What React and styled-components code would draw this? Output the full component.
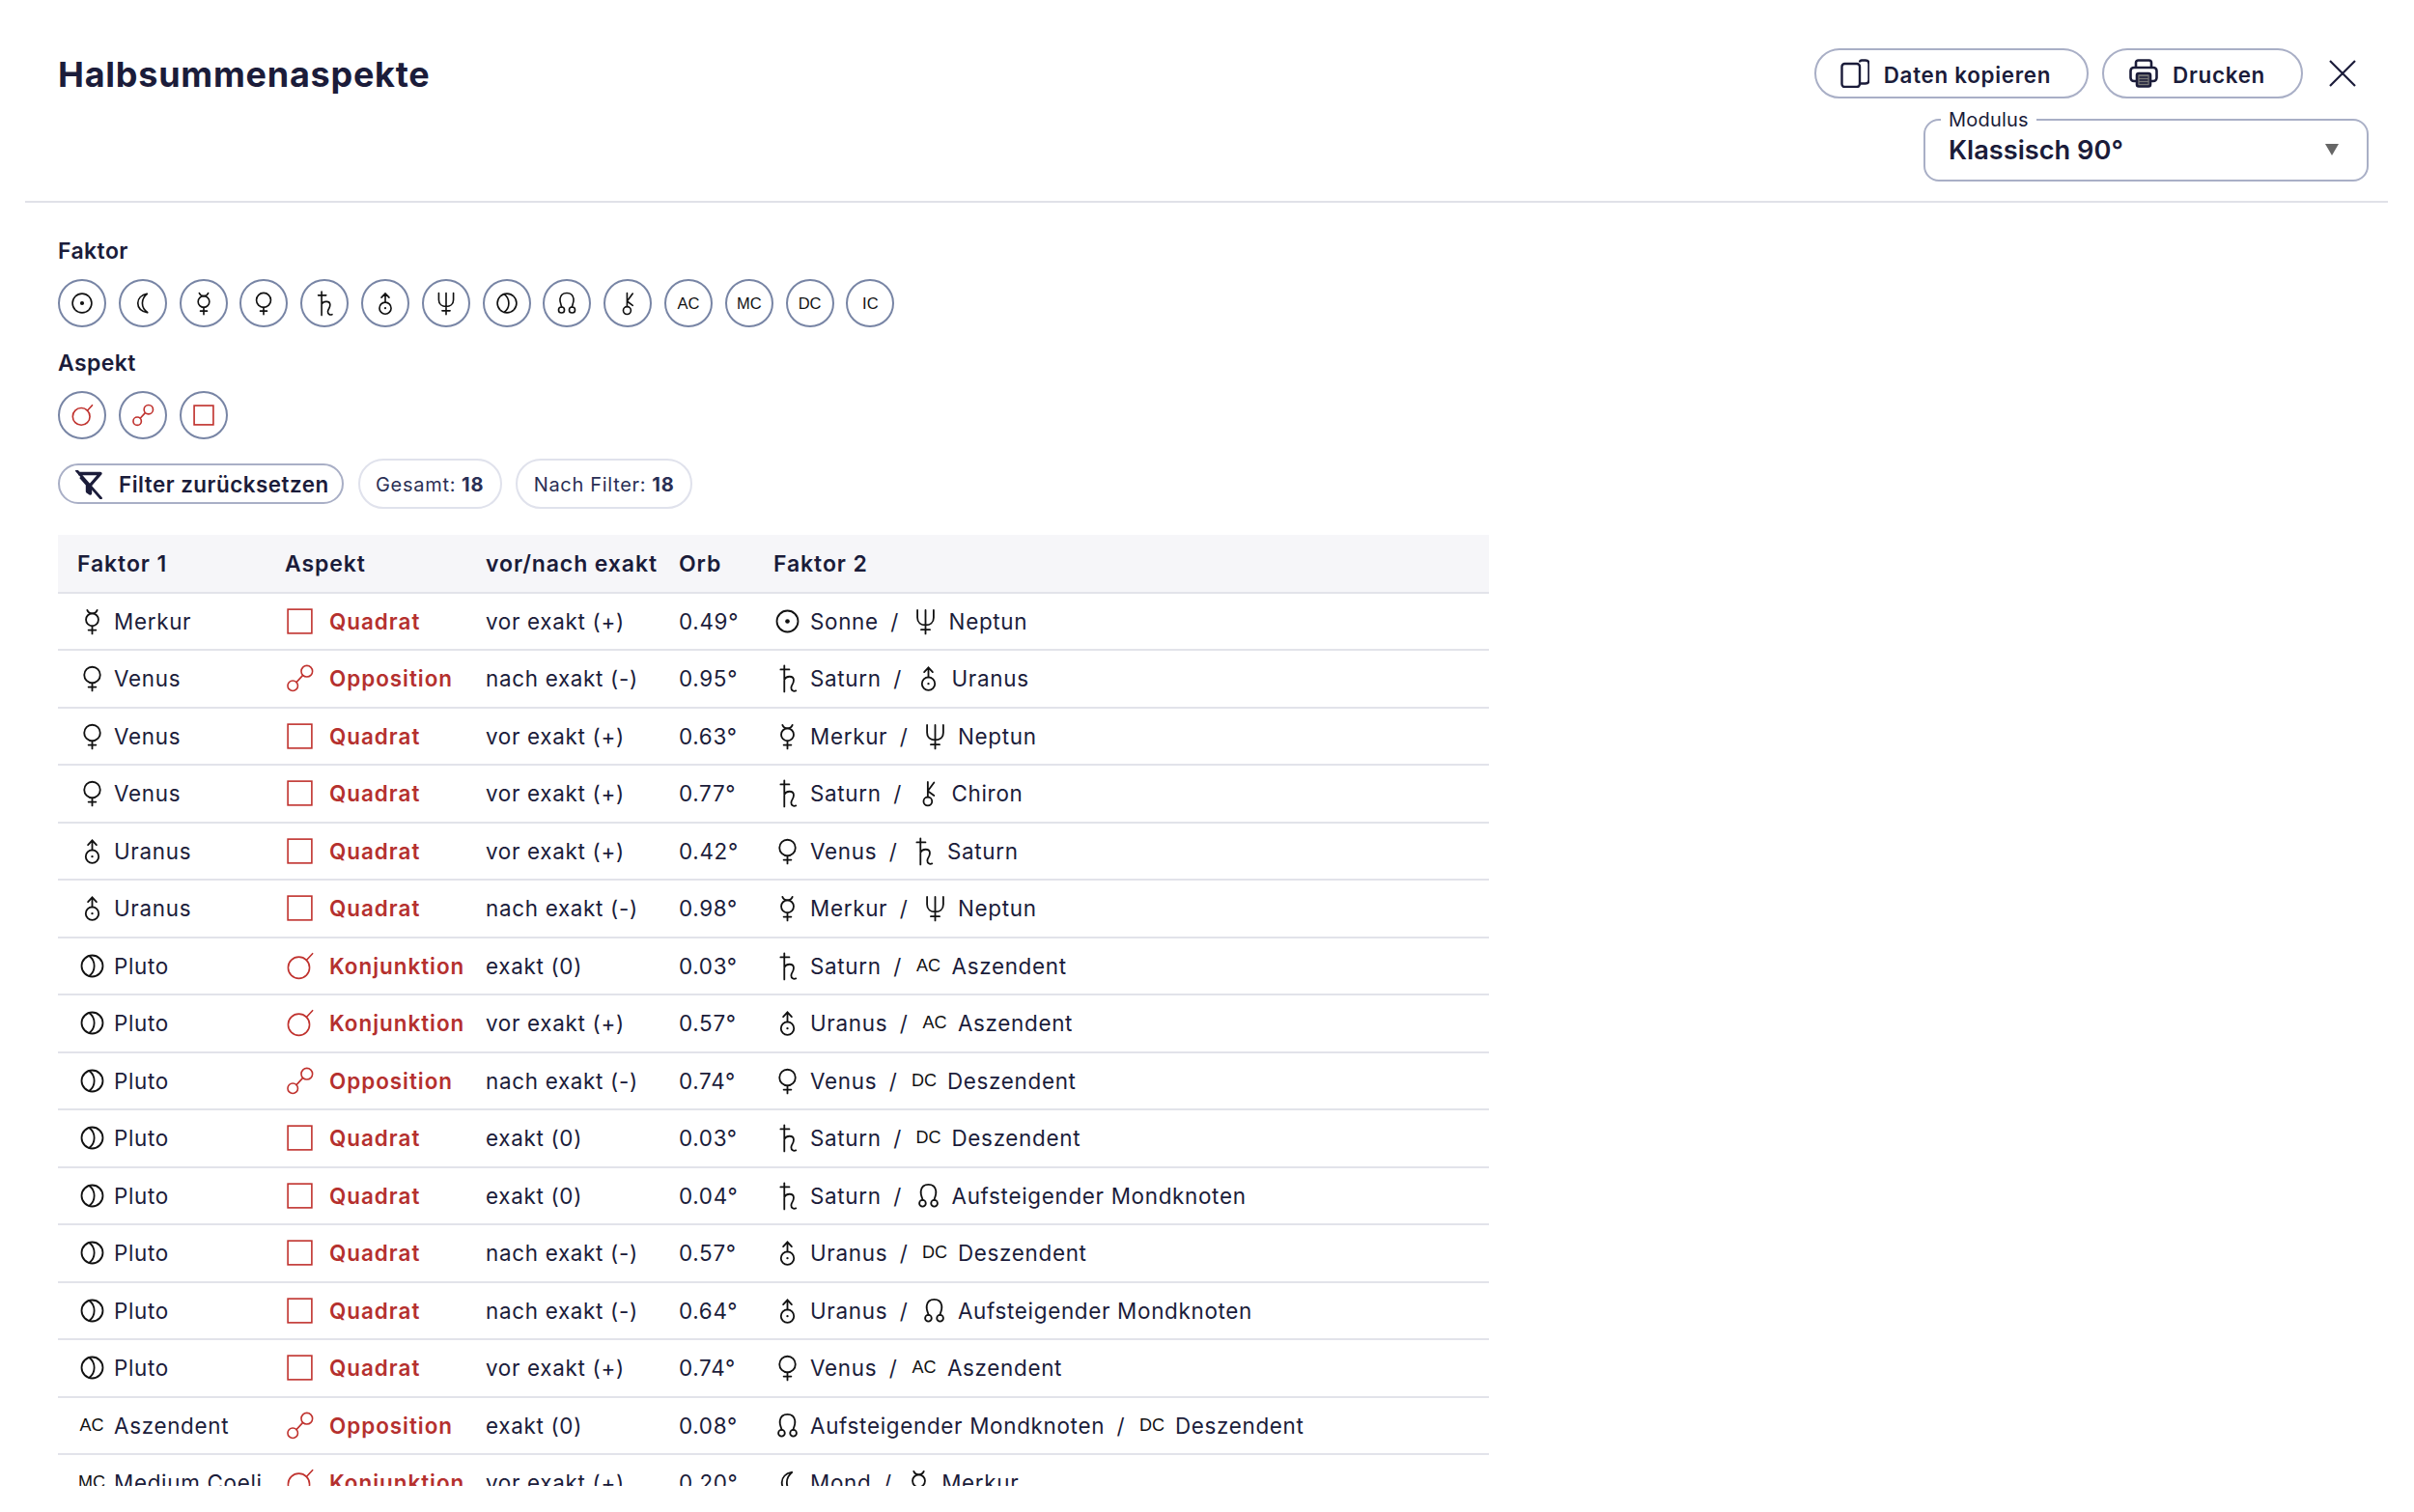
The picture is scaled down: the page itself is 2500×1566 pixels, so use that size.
// DEPENDENCIES
import React from 'react'
import styled, { createGlobalStyle } from 'styled-components'

// STYLES
const GlobalStyle = createGlobalStyle`
	html, body {
		margin: 0;
		background: #fff;
	}
	body {
		height: 1566px;
		overflow: hidden;
		font-family: Inter, "Liberation Sans", sans-serif;
		color: #1b1c3a;
	}
`

const Page = styled.div`
	width: 2500px;
	height: 1566px;
	box-sizing: border-box;
	padding: 0 27px 0 26px;
	overflow: hidden;
`

const Header = styled.header`
	display: flex;
	justify-content: space-between;
	align-items: flex-start;
	padding: 50px 20px 20px 34px;
	border-bottom: 2px solid #e0e1e8;
`

const Title = styled.h1`
	margin: 0;
	font-size: 36px;
	line-height: 54px;
	font-weight: 700;
	letter-spacing: 0.75px;
`

const HeaderRight = styled.div`
	display: flex;
	flex-direction: column;
	align-items: flex-end;
	gap: 21px;
`

const Actions = styled.div`
	display: flex;
	align-items: center;
`

const ActionButton = styled.button`
	display: flex;
	align-items: center;
	height: 52px;
	box-sizing: border-box;
	margin-right: 14px;
	padding: 0 37px 0 ${p => p.$left}px;
	gap: 15px;
	background: #fff;
	border: 2px solid #a9afc6;
	border-radius: 26px;
	font: 600 22.4px Inter, sans-serif;
	letter-spacing: 0.7px;
	color: #1b1c3a;

	span {
		padding-top: 2px;
	}
`

const CloseButton = styled.button`
	display: flex;
	width: 40px;
	height: 40px;
	margin: 0 7.5px 0 6.5px;
	padding: 0;
	align-items: center;
	justify-content: center;
	background: none;
	border: 0;
	color: #1b1c3a;
`

const SelectBox = styled.div`
	position: relative;
	display: flex;
	align-items: center;
	justify-content: space-between;
	width: 461px;
	height: 65px;
	box-sizing: border-box;
	padding: 0 29.5px 0 24px;
	border: 2px solid #a9afc6;
	border-radius: 16px;
`

const SelectLegend = styled.span`
	position: absolute;
	top: -13px;
	left: 16px;
	padding: 0 8px;
	background: #fff;
	font-size: 20px;
	line-height: 24px;
	letter-spacing: 0.2px;
`

const SelectValue = styled.span`
	font-size: 27.2px;
	font-weight: 600;
`

const SelectArrow = styled.span`
	width: 0;
	height: 0;
	margin-bottom: 2px;
	border-left: 7.5px solid transparent;
	border-right: 7.5px solid transparent;
	border-top: 12px solid #666;
`

const Main = styled.main`
	padding: 35px 0 0 34px;
`

const FilterLabel = styled.div`
	font-size: 23px;
	line-height: 30px;
	font-weight: 600;
	letter-spacing: 0.4px;
	margin-top: ${p => p.$top || 0}px;
`

const ChipRow = styled.div`
	display: flex;
	gap: 12.8px;
	margin-top: 14px;
`

const Chip = styled.button`
	display: flex;
	align-items: center;
	justify-content: center;
	width: 50px;
	height: 50px;
	padding: 0;
	background: #fff;
	border: 2px solid #7885a5;
	border-radius: 50%;
	color: ${p => (p.$aspect ? '#c0322e' : '#111')};
`

const ChipText = styled.span`
	font: 400 16.5px "Liberation Sans", sans-serif;
	color: #111;
`

const FilterBar = styled.div`
	display: flex;
	align-items: center;
	gap: 14.5px;
	margin-top: 20px;
	height: 52px;
`

const ResetButton = styled.button`
	display: flex;
	align-items: center;
	gap: 17px;
	width: 296px;
	height: 42px;
	box-sizing: border-box;
	padding: 1px 0 0 16px;
	background: #fff;
	border: 2px solid #a9afc6;
	border-radius: 21px;
	font: 600 22.4px Inter, sans-serif;
	letter-spacing: 0.5px;
	color: #1b1c3a;
	white-space: nowrap;
`

const CountPill = styled.div`
	height: 52px;
	box-sizing: border-box;
	padding: 1px 16.5px 0;
	display: flex;
	align-items: center;
	gap: 6px;
	border: 2px solid #e0e2ec;
	border-radius: 26px;
	font-size: 20px;
	letter-spacing: 0.7px;
	color: #2a2f55;

	b {
		font-weight: 700;
	}
`

const TableWrap = styled.div`
	width: 1482px;
	height: 985px;
	margin-top: 27px;
	overflow: hidden;
`

const Row = styled.div`
	display: grid;
	grid-template-columns: 215px 208px 200px 98px 1fr;
	align-items: center;
	height: ${p => (p.$head ? 60.5 : 59.5)}px;
	box-sizing: border-box;
	padding-top: ${p => (p.$head ? 1 : 0)}px;
	border-bottom: 2px solid #e2e3ea;
	background: ${p => (p.$head ? '#f6f6f9' : '#fff')};
	font-size: ${p => (p.$head ? 23 : 22.4)}px;
	font-weight: ${p => (p.$head ? 600 : 400)};
	letter-spacing: ${p => (p.$head ? 0.9 : 0.7)}px;
	white-space: nowrap;
`

const Cell = styled.div`
	display: flex;
	align-items: center;
	padding-left: ${p => p.$left ?? 20}px;
`

const AspectName = styled.span`
	margin-left: 13px;
	font-weight: 600;
	letter-spacing: 1px;
	color: #b5302e;
`

const AspectSlot = styled.span`
	display: flex;
	margin-left: -2px;
	color: #c0322e;
`

const GlyphSlot = styled.span`
	display: flex;
	align-items: center;
	justify-content: center;
	flex: none;
	width: 30px;
	margin-right: ${p => p.$gap}px;
	color: #111;
`

const GlyphText = styled.span`
	font: 400 18px "Liberation Sans", sans-serif;
	letter-spacing: 0;
	color: #111;
`

const Slash = styled.span`
	margin: 0 12.5px;
`

const GlyphSvg = styled.svg`
	overflow: visible;
`

// GLYPHS
const glyphs = {
	sun: <><circle cx="12" cy="12" r="8.5" /><circle cx="12" cy="12" r="1.8" fill="currentColor" stroke="none" /></>,
	moon: <path d="M16 3.5C10.5 4.5 7.5 8 7.5 12C7.5 16 10.5 19.5 16.5 20.5C13.3 18.5 11.5 15.5 11.5 12C11.5 8.8 13 5.8 16 3.5Z" />,
	mercury: <><path d="M8 3Q9 5.7 12 5.7Q15 5.7 16 3" /><circle cx="12" cy="10.7" r="5" /><path d="M12 15.7V22M9 19H15" /></>,
	venus: <><circle cx="12" cy="9.3" r="6.4" /><path d="M12 15.7V22M9 19H15" /></>,
	saturn: <path d="M9.5 1.8V22.8M6.5 5H13.5M9.5 13C11 9.8 17 9.8 17 13.5C17 16.5 15 17.5 15 19.5C15 21.8 16.8 22.8 18.8 22" />,
	uranus: <><circle cx="12" cy="16.4" r="5.2" /><circle cx="12" cy="16.4" r="0.9" fill="currentColor" stroke="none" /><path d="M12 11.2V3.4M8.6 7L12 3.4L15.4 7" /></>,
	neptune: <path d="M5.5 3V9C5.5 13 8.5 15 12 15C15.5 15 18.5 13 18.5 9V3M12 3V22M8.5 18.7H15.5" />,
	pluto: <><circle cx="12" cy="12" r="8.5" /><path d="M9.5 3.9A10 10 0 0 1 9.5 20.1" /></>,
	node: <><path d="M7.5 15.3C6.5 12.5 5.5 10.5 6 8C6.5 4.7 9 3 12 3C15 3 17.5 4.7 18 8C18.5 10.5 17.5 12.5 16.5 15.3" /><circle cx="7.3" cy="18" r="2.6" /><circle cx="16.7" cy="18" r="2.6" /></>,
	chiron: <><circle cx="11.5" cy="18.5" r="3.4" /><path d="M11.5 15V3M11.5 10.3L16.5 3.5M11.5 10.3L16.5 14" /></>,
	conjunction: <><circle cx="11.3" cy="13.2" r="7.6" /><path d="M16.7 7.9L21 3.2" /></>,
	opposition: <><circle cx="7" cy="17.3" r="3.6" /><circle cx="17" cy="7" r="4" /><path d="M9.6 14.8L14 10" /></>,
	square: <rect x="3.5" y="3.5" width="17" height="17" />,
}

const textGlyphs = ['AC', 'MC', 'DC', 'IC']

const Glyph = ({ name, size = 28, stroke = 1.4 }) => (
	<GlyphSvg
		width={size}
		height={size}
		viewBox="0 0 24 24"
		fill="none"
		stroke="currentColor"
		strokeWidth={stroke}
		strokeLinecap="round"
		strokeLinejoin="miter"
	>
		{glyphs[name]}
	</GlyphSvg>
)

const CopyIcon = () => (
	<svg width="30" height="30" viewBox="0 0 30 30" fill="none" stroke="currentColor" strokeWidth="2.4">
		<rect x="1.5" y="5" width="18.5" height="24" rx="3" />
		<path d="M20 3.5C20 2 21 1.5 22 1.5H26C28 1.5 29.5 3 29.5 5V22C29.5 24 28 25.5 26 25.5H20" />
	</svg>
)

const PrintIcon = () => (
	<svg width="30" height="30" viewBox="0 0 30 30" fill="none" stroke="currentColor" strokeWidth="2.6">
		<path d="M7 9V4C7 2.5 8 1.5 9.5 1.5H20.5C22 1.5 23 2.5 23 4V9" />
		<path d="M7 23H5C3 23 1.5 21.5 1.5 19.5V12.5C1.5 10.5 3 9 5 9H25C27 9 28.5 10.5 28.5 12.5V19.5C28.5 21.5 27 23 25 23H23" />
		<rect x="8" y="15" width="14" height="13.5" rx="2" fill="#777" />
		<path d="M10.5 19H19.5M10.5 22H19.5M10.5 25H19.5" strokeWidth="1.4" stroke="#1b1c3a" />
	</svg>
)

const CloseIcon = () => (
	<svg width="28" height="28" viewBox="0 0 28 28" fill="none" stroke="currentColor" strokeWidth="2.2">
		<path d="M1 1L27 27M27 1L1 27" />
	</svg>
)

const FilterOffIcon = () => (
	<svg width="28" height="30" viewBox="0 0 28 30" fill="none" stroke="currentColor" strokeWidth="3.4">
		<path d="M3 3.5H26L15.5 15.5V24L12.5 22V15L5.5 7" strokeLinejoin="round" />
		<path d="M1.5 0.5L26.5 29" strokeWidth="2.8" strokeLinecap="round" />
	</svg>
)

// DATA
const factorChips = ['sun', 'moon', 'mercury', 'venus', 'saturn', 'uranus', 'neptune', 'pluto', 'node', 'chiron', 'AC', 'MC', 'DC', 'IC']
const aspectChips = ['conjunction', 'opposition', 'square']

const bodies = {
	Merkur: 'mercury',
	Venus: 'venus',
	Uranus: 'uranus',
	Pluto: 'pluto',
	Sonne: 'sun',
	Mond: 'moon',
	Neptun: 'neptune',
	Saturn: 'saturn',
	Chiron: 'chiron',
	Aszendent: 'AC',
	Deszendent: 'DC',
	'Medium Coeli': 'MC',
	'Aufsteigender Mondknoten': 'node',
}

const aspects = {
	Quadrat: 'square',
	Opposition: 'opposition',
	Konjunktion: 'conjunction',
}

const VOR = 'vor exakt (+)'
const NACH = 'nach exakt (-)'
const EXAKT = 'exakt (0)'

const rows = [
	['Merkur', 'Quadrat', VOR, '0.49°', 'Sonne', 'Neptun'],
	['Venus', 'Opposition', NACH, '0.95°', 'Saturn', 'Uranus'],
	['Venus', 'Quadrat', VOR, '0.63°', 'Merkur', 'Neptun'],
	['Venus', 'Quadrat', VOR, '0.77°', 'Saturn', 'Chiron'],
	['Uranus', 'Quadrat', VOR, '0.42°', 'Venus', 'Saturn'],
	['Uranus', 'Quadrat', NACH, '0.98°', 'Merkur', 'Neptun'],
	['Pluto', 'Konjunktion', EXAKT, '0.03°', 'Saturn', 'Aszendent'],
	['Pluto', 'Konjunktion', VOR, '0.57°', 'Uranus', 'Aszendent'],
	['Pluto', 'Opposition', NACH, '0.74°', 'Venus', 'Deszendent'],
	['Pluto', 'Quadrat', EXAKT, '0.03°', 'Saturn', 'Deszendent'],
	['Pluto', 'Quadrat', EXAKT, '0.04°', 'Saturn', 'Aufsteigender Mondknoten'],
	['Pluto', 'Quadrat', NACH, '0.57°', 'Uranus', 'Deszendent'],
	['Pluto', 'Quadrat', NACH, '0.64°', 'Uranus', 'Aufsteigender Mondknoten'],
	['Pluto', 'Quadrat', VOR, '0.74°', 'Venus', 'Aszendent'],
	['Aszendent', 'Opposition', EXAKT, '0.08°', 'Aufsteigender Mondknoten', 'Deszendent'],
	['Medium Coeli', 'Konjunktion', VOR, '0.20°', 'Mond', 'Merkur'],
]

const Body = ({ name, gap }) => {
	const glyph = bodies[name]
	return (
		<>
			<GlyphSlot $gap={gap}>
				{textGlyphs.includes(glyph) ? <GlyphText>{glyph}</GlyphText> : <Glyph name={glyph} size={31} />}
			</GlyphSlot>
			{name}
		</>
	)
}

const App = () => (
	<Page>
		<GlobalStyle />
		<Header>
			<Title>Halbsummenaspekte</Title>
			<HeaderRight>
				<Actions>
					<ActionButton $left={25}><CopyIcon /><span>Daten kopieren</span></ActionButton>
					<ActionButton $left={26}><PrintIcon /><span>Drucken</span></ActionButton>
					<CloseButton aria-label="Schließen"><CloseIcon /></CloseButton>
				</Actions>
				<SelectBox>
					<SelectLegend>Modulus</SelectLegend>
					<SelectValue>Klassisch 90°</SelectValue>
					<SelectArrow />
				</SelectBox>
			</HeaderRight>
		</Header>
		<Main>
			<FilterLabel>Faktor</FilterLabel>
			<ChipRow>
				{factorChips.map(chip => (
					<Chip key={chip}>
						{textGlyphs.includes(chip) ? <ChipText>{chip}</ChipText> : <Glyph name={chip} />}
					</Chip>
				))}
			</ChipRow>
			<FilterLabel $top={22}>Aspekt</FilterLabel>
			<ChipRow>
				{aspectChips.map(chip => (
					<Chip key={chip} $aspect>
						<Glyph name={chip} />
					</Chip>
				))}
			</ChipRow>
			<FilterBar>
				<ResetButton><FilterOffIcon />Filter zurücksetzen</ResetButton>
				<CountPill>Gesamt: <b>18</b></CountPill>
				<CountPill>Nach Filter: <b>18</b></CountPill>
			</FilterBar>
			<TableWrap>
				<Row $head>
					<Cell>Faktor 1</Cell>
					<Cell>Aspekt</Cell>
					<Cell>vor/nach exakt</Cell>
					<Cell>Orb</Cell>
					<Cell>Faktor 2</Cell>
				</Row>
				{rows.map((row, i) => (
					<Row key={i}>
						<Cell><Body name={row[0]} gap={8} /></Cell>
						<Cell>
							<AspectSlot><Glyph name={aspects[row[1]]} size={35} stroke={1.1} /></AspectSlot>
							<AspectName>{row[1]}</AspectName>
						</Cell>
						<Cell>{row[2]}</Cell>
						<Cell>{row[3]}</Cell>
						<Cell $left={19}>
							<Body name={row[4]} gap={9} />
							<Slash>/</Slash>
							<Body name={row[5]} gap={9} />
						</Cell>
					</Row>
				))}
			</TableWrap>
		</Main>
	</Page>
)

export default App
